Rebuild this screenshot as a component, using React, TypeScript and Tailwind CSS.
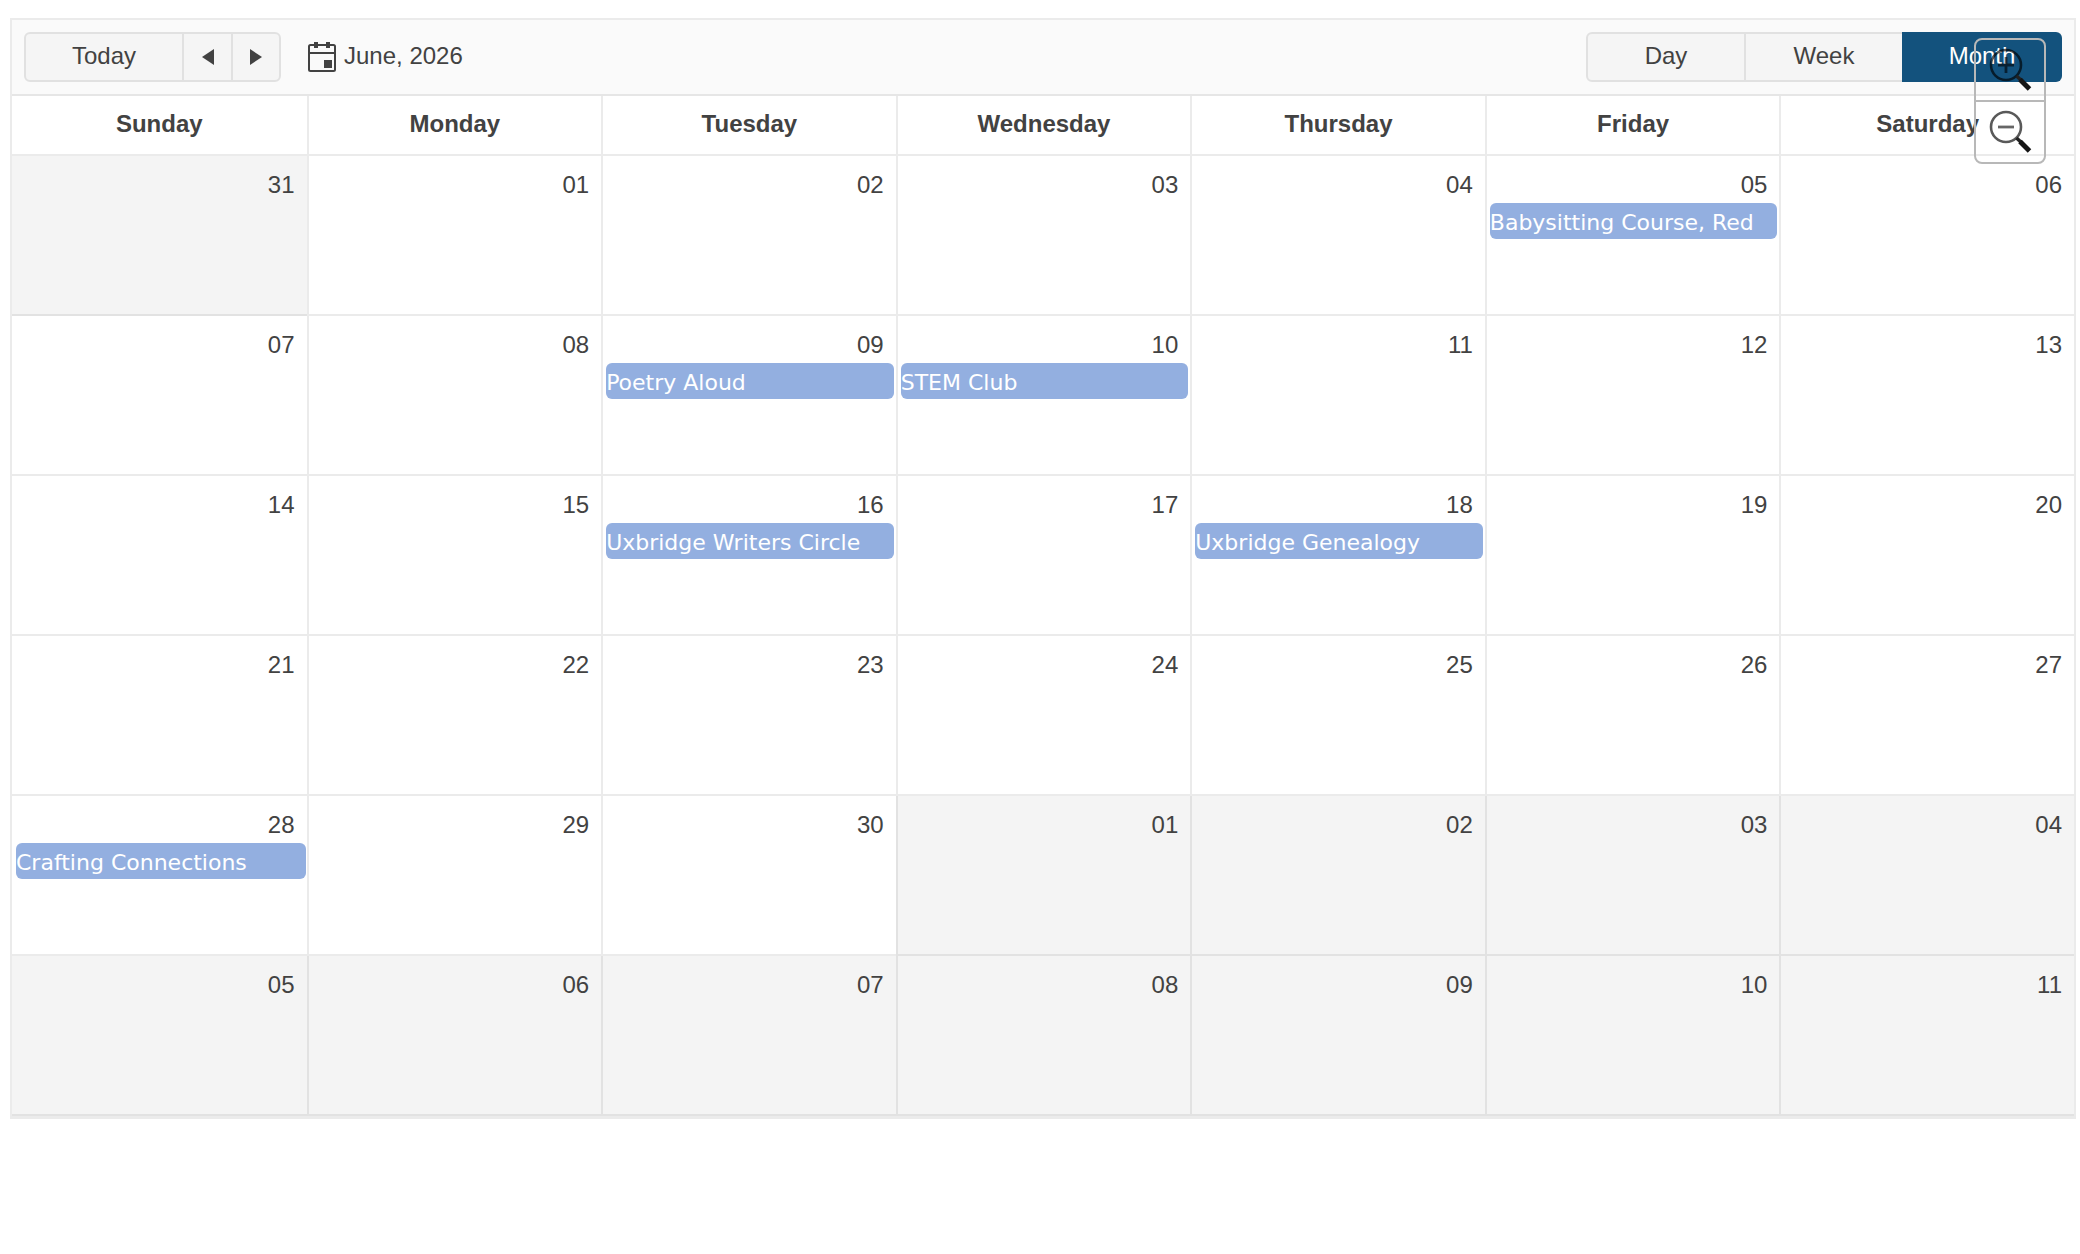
const days = ['Sunday', 'Monday', 'Tuesday', 'Wednesday', 'Thursday', 'Friday', 'Saturday'];

type Cell = { day: string; other?: boolean; event?: string };

const range = (from: number, to: number, other = false): Cell[] =>
  Array.from({ length: to - from + 1 }, (_, i) => ({
    day: String(from + i).padStart(2, '0'),
    other,
  }));

const events: Record<string, string> = {
  '05': 'Babysitting Course, Red',
  '09': 'Poetry Aloud',
  '10': 'STEM Club',
  '16': 'Uxbridge Writers Circle',
  '18': 'Uxbridge Genealogy',
  '28': 'Crafting Connections',
};

const cells: Cell[] = [
  ...range(31, 31, true),
  ...range(1, 30).map((c) => ({ ...c, event: events[c.day] })),
  ...range(1, 11, true),
];
const weeks = Array.from({ length: 6 }, (_, i) => cells.slice(i * 7, i * 7 + 7));

const button = 'h-[50px] border-2 border-[#e1e1e1] bg-[#f5f5f5] pb-[3px] leading-7';

function Lens({ plus }: { plus?: boolean }) {
  return (
    <svg viewBox="0 0 68 60" className="h-[60px] w-[68px]" fill="none" aria-hidden="true">
      <circle cx="30" cy="25" r="15" stroke="#000" strokeOpacity="0.65" strokeWidth="2.6" />
      <path
        d={plus ? 'M22 25h16M30 17v16' : 'M22 25h16'}
        stroke="#000"
        strokeOpacity="0.6"
        strokeWidth="2.8"
      />
      <path d="M40.5 36L46 41" stroke="#222" strokeWidth="3.6" />
      <path d="M44 39.5L53.5 49" stroke="#151515" strokeWidth="5" />
    </svg>
  );
}

export default function App() {
  return (
    <div className="relative pt-[18px] pr-1 pl-2.5 font-['Liberation_Sans',Arial,sans-serif] text-2xl leading-7 text-[#424242]">
      <div className="border-2 border-b-[3px] border-[#ebebeb]">
        <header className="flex items-center justify-between border-b-2 border-[#e6e6e6] bg-[#fafafa] p-3">
          <div className="flex items-center">
            <button className={`${button} w-40 rounded-l-md`}>Today</button>
            <button aria-label="Previous month" className={`${button} -ml-0.5 w-[51px]`}>
              <svg viewBox="0 0 12 16" className="mx-auto mt-[3px] h-4 w-3 fill-[#424242]">
                <path d="M12 0v16L0 8z" />
              </svg>
            </button>
            <button aria-label="Next month" className={`${button} -ml-0.5 w-[50px] rounded-r-md`}>
              <svg viewBox="0 0 12 16" className="mx-auto mt-[3px] h-4 w-3 fill-[#424242]">
                <path d="M0 0v16l12-8z" />
              </svg>
            </button>
            <button className="ml-[27px] flex items-start gap-2">
              <svg viewBox="0 0 28 30" className="h-[30px] w-7" aria-hidden="true">
                <rect x="1" y="3" width="26" height="26" rx="1.5" fill="none" stroke="#424242" strokeWidth="2" />
                <path d="M1 11h26" stroke="#424242" strokeWidth="2" />
                <path d="M6 0h4v6H6zM18 0h4v6h-4zM16 18h8v8h-8z" fill="#424242" />
              </svg>
              <span>June, 2026</span>
            </button>
          </div>
          <div className="flex">
            <button className={`${button} w-40 rounded-l-md`}>Day</button>
            <button className={`${button} -ml-0.5 w-40`}>Week</button>
            <button className="-ml-0.5 h-[50px] w-40 rounded-r-md bg-[#13527d] pb-[3px] leading-7 text-white">
              Month
            </button>
          </div>
        </header>
        <table className="w-full table-fixed border-separate border-spacing-0">
          <thead>
            <tr>
              {days.map((d) => (
                <th
                  key={d}
                  scope="col"
                  className="h-[60px] border-b-2 border-l-2 border-[#ebebeb] p-0 pb-0.5 text-center font-bold first:border-l-0"
                >
                  {d}
                </th>
              ))}
            </tr>
          </thead>
          <tbody>
            {weeks.map((week, w) => (
              <tr key={w}>
                {week.map((c) => (
                  <td
                    key={c.day}
                    className={`group h-40 border-b-2 border-l-2 p-0 pt-[15px] align-top first:border-l-0 ${
                      c.other ? 'border-[#e2e2e2] bg-[#f4f4f4]' : 'border-[#ebebeb]'
                    }`}
                  >
                    <div className="pr-3 text-right">{c.day}</div>
                    {c.event && (
                      <a
                        href="#"
                        className="mt-1 mr-0.5 ml-[3px] block h-9 overflow-hidden rounded-md bg-[#93afe0] pt-1.5 font-['DejaVu_Sans',Verdana,sans-serif] text-[22px] leading-7 whitespace-nowrap text-white group-first:mr-px group-first:ml-1"
                      >
                        {c.event}
                      </a>
                    )}
                  </td>
                ))}
              </tr>
            ))}
          </tbody>
        </table>
      </div>
      <div className="absolute top-[38px] right-[34px] w-[72px] rounded-lg border-2 border-[#b8b8b8]">
        <button aria-label="Zoom in" className="block border-b-2 border-[#b8b8b8]">
          <Lens plus />
        </button>
        <button aria-label="Zoom out" className="block">
          <Lens />
        </button>
      </div>
    </div>
  );
}
